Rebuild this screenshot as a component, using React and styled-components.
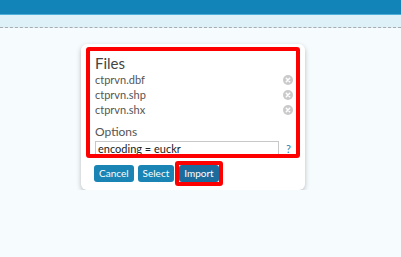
import styled, { createGlobalStyle } from "styled-components";

const files = ["ctprvn.dbf", "ctprvn.shp", "ctprvn.shx"];

export default function App() {
  return (
    <>
      <Global />
      <Header />
      <Band />
      <Page>
        <Dialog>
          <Marked>
            <Title>Files</Title>
            {files.map((f) => (
              <FileRow key={f}>
                <span>{f}</span>
                <RemoveIcon />
              </FileRow>
            ))}
            <Label>Options</Label>
            <OptionRow>
              <Input defaultValue="encoding = euckr" />
              <Help>?</Help>
            </OptionRow>
          </Marked>
          <Buttons>
            <Button>Cancel</Button>
            <Button>Select</Button>
            <MarkedButton>
              <Button $active>Import</Button>
            </MarkedButton>
          </Buttons>
        </Dialog>
      </Page>
    </>
  );
}

function RemoveIcon() {
  return (
    <svg width="10" height="10" viewBox="0 0 10 10">
      <circle cx="5" cy="5" r="5" fill="#cacaca" />
      <path d="M3.3 3.3 L6.7 6.7 M6.7 3.3 L3.3 6.7" stroke="#fff" strokeWidth="1.5" strokeLinecap="round" />
    </svg>
  );
}

const Global = createGlobalStyle`
  body {
    margin: 0;
    background: #f6fbfe;
    font-family: Lato, "Open Sans", sans-serif;
  }
`;

const Header = styled.div`
  height: 14px;
  background: #1384b8;
  border-bottom: 1px solid #4db0d9;
`;

const Band = styled.div`
  height: 12px;
  background: #dff1f8;
  border-bottom: 1px dashed #a9acae;
`;

const Page = styled.div`
  padding: 16px 0 0 81px;
`;

const Dialog = styled.div`
  width: 214px;
  padding: 3px 5px 4px;
  background: #fff;
  border-radius: 6px;
  box-shadow: 0 2px 5px rgba(0, 0, 0, 0.25);
`;

const Marked = styled.div`
  border: 4px solid #ff0000;
  border-radius: 3px;
  padding: 3px 3px 0 5px;
  height: 100px;
  box-sizing: content-box;
  overflow: hidden;
`;

const Title = styled.div`
  font-size: 15px;
  line-height: 18px;
  color: #444;
`;

const FileRow = styled.div`
  display: flex;
  align-items: center;
  justify-content: space-between;
  height: 15px;
  font-size: 11px;
  color: #555;
`;

const Label = styled.div`
  margin-top: 7px;
  font-size: 12px;
  line-height: 16px;
  color: #555;
`;

const OptionRow = styled.div`
  display: flex;
  align-items: flex-start;
  margin-top: 1px;
`;

const Input = styled.input`
  width: 184px;
  height: 16px;
  box-sizing: border-box;
  border: 1px solid #c8c8c8;
  padding: 0 2px 2px;
  font-family: inherit;
  font-size: 11px;
  line-height: 12px;
  color: #222;
  outline: none;
`;

const Help = styled.span`
  margin: 1px 0 0 7px;
  font-size: 11px;
  color: #2b7fb1;
`;

const Buttons = styled.div`
  display: flex;
  align-items: center;
  gap: 4px;
  margin: 3px 0 0 8px;
`;

const Button = styled.button`
  height: 17px;
  padding: 0 5px;
  border: none;
  border-radius: 3px;
  background: ${(p) => (p.$active ? "#1b6b9c" : "#1a84b4")};
  color: #fff;
  font-family: inherit;
  font-size: 10px;
  line-height: 17px;
`;

const MarkedButton = styled.div`
  display: flex;
  border: 4px solid #ff0000;
  border-radius: 3px;
  margin-left: -3px;
`;
